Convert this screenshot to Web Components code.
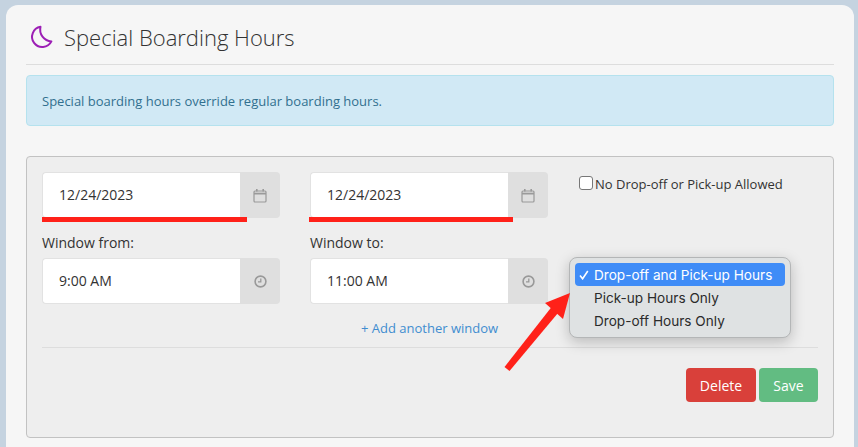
<!DOCTYPE html>
<html>
<head>
<meta charset="utf-8">
<title>Special Boarding Hours</title>
<style>
  html, body { margin: 0; height: 447px; overflow: hidden; background: #c5d3e0; }
  body { padding: 5px 4px 0 6px; box-sizing: border-box; font-family: "Open Sans", sans-serif; color: #333; }
</style>
</head>
<body>
<boarding-card>
  <svg slot="icon" width="24" height="24" viewBox="0 0 24 24" fill="none" stroke="#9c1fb5" stroke-width="2" stroke-linecap="round" stroke-linejoin="round"><path d="M11.500 1.800 A10.200 10.200 0 1 0 22.400 16.400 A11.800 11.800 0 0 1 11.500 1.800 Z"/></svg>
  <span slot="title">Special Boarding Hours</span>
  <span slot="notice">Special boarding hours override regular boarding hours.</span>
  <hours-form></hours-form>
</boarding-card>

<script>
const ICONS = {
  calendar: `<svg width="14" height="15" viewBox="0 0 14 15" fill="none" stroke="#9a9a9a" stroke-width="1.2"><rect x="1" y="3" width="12" height="11" rx="1"/><path d="M1 5.600h12" stroke-width="1.800"/><path d="M3.800 1v2.600M10.200 1v2.600" stroke-width="1.600"/></svg>`,
  clock: `<svg width="13" height="13" viewBox="0 0 13 13" fill="none" stroke="#999" stroke-width="1.600"><circle cx="6.500" cy="6.500" r="5.400"/><path d="M6.800 3.400v3.500H4" stroke-width="1.300"/></svg>`
};

class BoardingCard extends HTMLElement {
  constructor() {
    super();
    this.attachShadow({ mode: 'open' });
    this.shadowRoot.innerHTML = `
    <style>
      :host { display: block; height: 442px; box-sizing: border-box; background: #f6f6f6; border-radius: 12px 12px 0 0; padding: 0 20px; }
      header { display: flex; align-items: center; gap: 10px; height: 60px; padding: 4px 0 0 3px; box-sizing: border-box; border-bottom: 1px solid #ddd; }
      .title { font-size: 22px; font-weight: 300; color: #333; }
      .ico { display: flex; width: 25px; }
      .notice { margin: 10px 0 30px; height: 51px; box-sizing: border-box; padding: 0 15px; display: flex; align-items: center; background: #d1e9f5; border: 1px solid #b5e2ee; border-radius: 4px; color: #31708f; font-size: 13px; }
    </style>
    <header><span class="ico"><slot name="icon"></slot></span><span class="title"><slot name="title"></slot></span></header>
    <div class="notice"><slot name="notice"></slot></div>
    <slot></slot>`;
  }
}
customElements.define('boarding-card', BoardingCard);

class AddonField extends HTMLElement {
  constructor() {
    super();
    this.attachShadow({ mode: 'open' });
  }
  connectedCallback() {
    const icon = ICONS[this.getAttribute('icon')] || '';
    const mark = this.getAttribute('mark');
    this.shadowRoot.innerHTML = `
    <style>
      :host { display: flex; position: relative; height: 46px; font-size: 14px; color: #333; }
      .val { flex: 1; box-sizing: border-box; background: #fff; border: 1px solid #e2e2e2; border-right: 0; border-radius: 4px 0 0 4px; padding: 0 0 2px 16px; display: flex; align-items: center; }
      .add { width: 40px; background: #dfdfdf; border-radius: 0 4px 4px 0; display: flex; align-items: center; justify-content: center; }
      .mark { position: absolute; top: 45px; height: 5px; background: #ff2119; }
    </style>
    <div class="val">${this.getAttribute('value')}</div>
    <div class="add">${icon}</div>
    ${mark ? `<div class="mark" style="${mark}"></div>` : ''}`;
  }
}
customElements.define('addon-field', AddonField);

class HoursMenu extends HTMLElement {
  constructor() {
    super();
    this.attachShadow({ mode: 'open' });
    this.items = ['Drop-off and Pick-up Hours', 'Pick-up Hours Only', 'Drop-off Hours Only'];
    this.shadowRoot.innerHTML = `
    <style>
      :host { display: block; width: 222px; height: 81px; box-sizing: border-box; padding: 5px; background: #dfe2e3; border: 1px solid #b4b6b7; border-radius: 8px; box-shadow: 0 4px 14px rgba(0,0,0,.22); font-family: Inter, "Liberation Sans", sans-serif; font-size: 13.6px; color: #2b2b2b; position: relative; z-index: 2; }
      div { display: flex; align-items: center; height: 23px; padding-left: 19px; border-radius: 4px; position: relative; }
      .on { background: #3f8cf7; color: #fff; }
      svg { position: absolute; left: 4px; top: 7px; }
    </style>
    ${this.items.map((t, i) => `<div class="${i === 0 ? 'on' : ''}">${i === 0 ? '<svg width="10" height="10" viewBox="0 0 10 10" fill="none" stroke="#fff" stroke-width="1.6"><path d="M1 5.6 3.6 8.8 8.8 1"/></svg>' : ''}${t}</div>`).join('')}`;
  }
}
customElements.define('hours-menu', HoursMenu);

class ActionButton extends HTMLElement {
  constructor() {
    super();
    this.attachShadow({ mode: 'open' });
    this.shadowRoot.innerHTML = `
    <style>
      :host { display: flex; align-items: center; justify-content: center; height: 34px; border-radius: 4px; color: #fff; font-size: 14px; box-sizing: border-box; }
      :host([kind="danger"]) { background: #d9403a; width: 70px; }
      :host([kind="ok"]) { background: #62bc82; width: 59px; }
    </style>
    <slot></slot>`;
  }
}
customElements.define('action-button', ActionButton);

class HoursForm extends HTMLElement {
  constructor() {
    super();
    this.attachShadow({ mode: 'open' });
    this.shadowRoot.innerHTML = `
    <style>
      :host { display: block; position: relative; height: 282px; box-sizing: border-box; background: #eee; border: 1px solid #c2c2c2; border-radius: 4px; padding: 15px; }
      .grid { display: grid; grid-template-columns: 238px 238px 1fr; column-gap: 30px; grid-template-rows: 46px 40px 46px 43px; }
      .lab { font-size: 14px; color: #333; line-height: 30px; height: 30px; margin-top: 10px; }
      .check { display: flex; align-items: flex-start; gap: 2px; font-size: 13px; padding-top: 4px; margin-left: 1px; color: #333; line-height: 16px; white-space: nowrap; }
      .box { width: 12px; height: 12px; background: #fff; border: 1px solid #777; border-radius: 3px; flex: none; }
      hours-menu { grid-column: 3; grid-row: 3 / span 2; margin: -1px 0 0 -9px; }
      .add { grid-column: 2; grid-row: 4; font-size: 13px; color: #3f8dd0; padding: 16px 0 0 51px; line-height: 17px; white-space: nowrap; }
      .rule { border-top: 1px solid #ddd; }
      .acts { display: flex; justify-content: flex-end; gap: 3px; margin-top: 20px; }
      .arrow { position: absolute; left: 470px; top: 130px; z-index: 3; }
    </style>
    <div class="grid">
      <addon-field icon="calendar" value="12/24/2023" mark="left:0;width:205px"></addon-field>
      <addon-field icon="calendar" value="12/24/2023" mark="left:-1px;width:204px"></addon-field>
      <label class="check"><span class="box"></span><span>No Drop-off or Pick-up Allowed</span></label>
      <div class="lab">Window from:</div>
      <div class="lab">Window to:</div>
      <div></div>
      <addon-field icon="clock" value="9:00 AM"></addon-field>
      <addon-field icon="clock" value="11:00 AM"></addon-field>
      <hours-menu></hours-menu>
      <div class="add">+ Add another window</div>
    </div>
    <div class="rule"></div>
    <div class="acts"><action-button kind="danger">Delete</action-button><action-button kind="ok">Save</action-button></div>
    <svg class="arrow" width="110" height="100" viewBox="0 0 110 100"><path d="M12.500 84 L7.500 80 L56.500 17.500 L63.500 23 Z" fill="#ff2119"/><path d="M73 6 L48 16 L66 32 Z" fill="#ff2119"/></svg>`;
  }
}
customElements.define('hours-form', HoursForm);
</script>
</body>
</html>
